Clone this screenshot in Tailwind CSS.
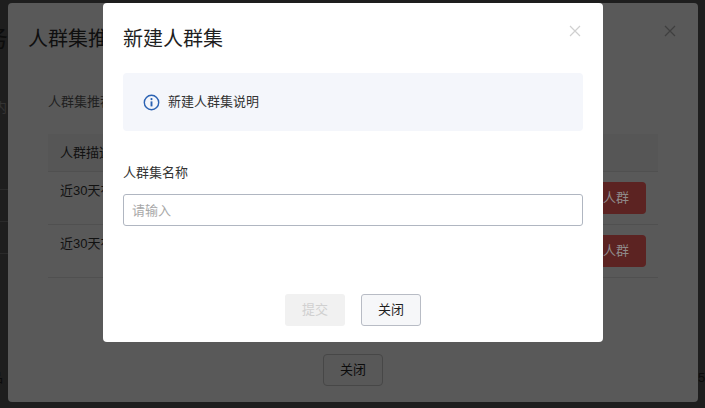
<!DOCTYPE html>
<html lang="zh-CN">
<head>
    <meta charset="UTF-8">
    <meta name="viewport" content="width=device-width, initial-scale=1.0">
    <title>新建人群集</title>
    <script src="https://cdn.jsdelivr.net/npm/@tailwindcss/browser@4"></script>
</head>
<body class="relative w-[705px] h-[408px] overflow-hidden bg-[#1e1e1e] font-['Liberation_Sans','Noto_Sans_CJK_SC',sans-serif] text-[13px]">
    <!-- page behind both dialogs, mostly hidden -->
    <div class="absolute inset-0 text-[#0c0c0c]">
        <div class="absolute left-[-16px] top-[24px] text-[24px] leading-[30px]">务</div>
        <div class="absolute left-[-6px] top-[98px] leading-5 text-[#333]">内</div>
        <div class="absolute left-0 top-[189px] w-[8px] h-px bg-[#2a2a2a]"></div>
        <div class="absolute left-0 top-[221px] w-[8px] h-px bg-[#2a2a2a]"></div>
        <div class="absolute left-0 top-[253px] w-[8px] h-px bg-[#2a2a2a]"></div>
        <div class="absolute left-[-10px] top-[368px] leading-5">品</div>
        <div class="absolute left-[698px] top-[368px] leading-5">5</div>
    </div>

    <!-- first dialog, dimmed -->
    <div class="absolute left-[8px] top-[3px] w-[690px] h-[399px] rounded bg-[#595959] flex flex-col">
        <div class="absolute right-[21px] top-[21px] text-[#3f3f3f]">
            <svg class="w-[14px] h-[14px]" viewBox="0 0 14 14" fill="none" stroke="currentColor" stroke-width="1.2"><path d="M2 2l10 10M12 2L2 12"/></svg>
        </div>
        <h2 class="pl-[20px] pt-[21px] text-[20px] leading-[30px] text-[#0f0f0f]">人群集推送</h2>
        <p class="pl-[40px] pt-[38px] leading-5 text-[#1f1f1f]">人群集推荐说明</p>
        <div class="mx-[40px] mt-[22px] w-[610px]">
            <div class="h-[38px] flex items-center px-[12px] bg-[#565656] border-b border-[#505050] text-[#111]">人群描述</div>
            <div class="h-[53px] flex items-start justify-between px-[12px] border-b border-[#505050] text-[#111]">
                <span class="mt-[9px] leading-5">近30天有访问的人群</span>
                <span class="mt-[10px] w-[120px] h-[32px] flex items-center justify-end pr-[17px] rounded bg-[#5c2322] text-[#8f8a8a]">推送人群</span>
            </div>
            <div class="h-[53px] flex items-start justify-between px-[12px] border-b border-[#505050] text-[#111]">
                <span class="mt-[9px] leading-5">近30天有访问的人群</span>
                <span class="mt-[10px] w-[120px] h-[32px] flex items-center justify-end pr-[17px] rounded bg-[#5c2322] text-[#8f8a8a]">推送人群</span>
            </div>
        </div>
        <div class="mt-auto mb-[16px] flex justify-center">
            <button class="w-[60px] h-[32px] rounded border border-[#474747] bg-[#585858] text-[#0c0c0c]">关闭</button>
        </div>
    </div>

    <!-- second dialog -->
    <div class="absolute left-[103px] top-[3px] w-[500px] h-[339px] rounded bg-white flex flex-col px-[20px]">
        <div class="absolute right-[21px] top-[21px] text-[#d0d0d0]">
            <svg class="w-[14px] h-[14px]" viewBox="0 0 14 14" fill="none" stroke="currentColor" stroke-width="1.2"><path d="M2 2l10 10M12 2L2 12"/></svg>
        </div>
        <h2 class="pt-[21px] text-[20px] leading-[30px] text-[#1f1f1f]">新建人群集</h2>
        <div class="mt-[19px] h-[58px] flex items-center gap-[8px] px-[20px] rounded bg-[#f4f6fb] text-[#333]">
            <svg class="w-[17px] h-[17px] shrink-0" viewBox="0 0 17 17" fill="none"><circle cx="8.5" cy="8.5" r="7.2" stroke="#2b62b3" stroke-width="1.4"/><circle cx="8.5" cy="5.1" r="1.1" fill="#2b62b3"/><path d="M8.5 7.4v5" stroke="#2b62b3" stroke-width="1.9"/></svg>
            <span>新建人群集说明</span>
        </div>
        <label class="mt-[32px] leading-5 text-[#333]">人群集名称</label>
        <input type="text" placeholder="请输入" class="mt-[11px] h-[32px] w-full px-[8px] rounded-[3px] border border-[#b0b6c1] text-[13px] outline-none placeholder:text-[#a8a8a8]">
        <div class="mt-auto mb-[16px] flex justify-center gap-[16px]">
            <button class="w-[60px] h-[32px] rounded-[3px] bg-[#f1f1f1] text-[#d0d0d0]">提交</button>
            <button class="w-[60px] h-[32px] rounded-[3px] border border-[#b8bcc5] bg-[#f6f7f9] text-[#1f1f1f]">关闭</button>
        </div>
    </div>
</body>
</html>
